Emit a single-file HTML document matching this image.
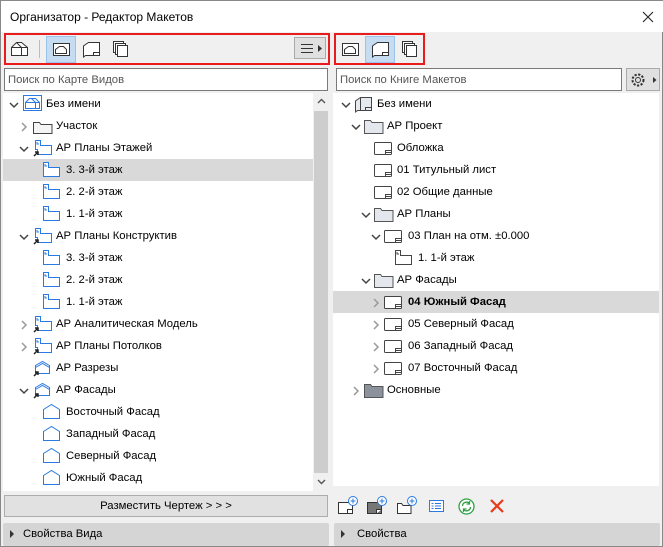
<!DOCTYPE html>
<html><head><meta charset="utf-8"><style>
*{margin:0;padding:0;box-sizing:border-box}
body{width:663px;height:547px;background:#f0f0f0;font-family:"Liberation Sans","Noto Sans CJK SC",sans-serif;font-size:11.3px;color:#000;position:relative;overflow:hidden;border:1px solid #888}
.a{position:absolute}
.t{position:absolute;white-space:nowrap;line-height:14px}
svg{position:absolute;overflow:visible}
</style></head><body>
<div class="a" style="left:0;top:0;width:663px;height:31px;background:#fff"></div>
<div class="t" style="left:9px;top:9px;font-size:12px">Организатор - Редактор Макетов</div>
<svg style="left:641px;top:10px" width="12" height="12"><path d="M1 1l10 10M11 1L1 11" stroke="#222" stroke-width="1.1"/></svg>

<div class="a" style="left:3px;top:32px;width:326px;height:32px;border:2px solid #e81c1c"></div>
<div class="a" style="left:333px;top:32px;width:91px;height:32px;border:2px solid #e81c1c"></div>
<svg style="left:9px;top:40px" width="20" height="16"><path d="M1.5 14.5v-8l5-5h5l6 5v8zM6.5 1.5l5 5v8M1.5 6.5h10l6 0" stroke="#333" fill="#fff"/></svg>
<div class="a" style="left:38px;top:39px;width:1px;height:18px;background:#bbb"></div>
<div class="a" style="left:45px;top:35px;width:30px;height:27px;background:#c5dcf2;border:1px solid #9cc3ea"></div>
<svg style="left:51px;top:41px" width="20" height="16"><rect x="1.5" y="1.5" width="16" height="12" fill="#fff" stroke="#333"/><path d="M3.5 11.5v-4l4-3h4l3 3v4z" fill="#fff" stroke="#333"/></svg>
<svg style="left:81px;top:40px" width="20" height="17"><path d="M3.5 3.5l3-2h11v13h-14l-2 1.5v-11z" fill="#fff" stroke="#333"/><path d="M11.5 14.5v-3h6" stroke="#333" fill="none"/></svg>
<svg style="left:111px;top:39px" width="18" height="18"><rect x="1.5" y="1.5" width="10" height="11" fill="#fff" stroke="#333"/><rect x="3.5" y="3.5" width="10" height="11" fill="#fff" stroke="#333"/><rect x="5.5" y="5.5" width="10" height="11" fill="#fff" stroke="#333"/></svg>
<div class="a" style="left:293px;top:36px;width:32px;height:22px;background:#e0e0e0;border:1px solid #aaa"></div>
<svg style="left:300px;top:42px" width="22" height="12"><path d="M0 1.5h12M0 5.5h12M0 9.5h12" stroke="#333"/><path d="M17 2l4 3.5-4 3.5z" fill="#333"/></svg>

<svg style="left:340px;top:41px" width="20" height="16"><rect x="1.5" y="1.5" width="16" height="12" fill="#fff" stroke="#333"/><path d="M3.5 11.5v-4l4-3h4l3 3v4z" fill="#fff" stroke="#333"/></svg>
<div class="a" style="left:364px;top:35px;width:30px;height:27px;background:#c5dcf2;border:1px solid #9cc3ea"></div>
<svg style="left:370px;top:40px" width="20" height="17"><path d="M3.5 3.5l3-2h11v13h-14l-2 1.5v-11z" fill="#fff" stroke="#333"/><path d="M11.5 14.5v-3h6" stroke="#333" fill="none"/></svg>
<svg style="left:400px;top:39px" width="18" height="18"><rect x="1.5" y="1.5" width="10" height="11" fill="#fff" stroke="#333"/><rect x="3.5" y="3.5" width="10" height="11" fill="#fff" stroke="#333"/><rect x="5.5" y="5.5" width="10" height="11" fill="#fff" stroke="#333"/></svg>

<div class="a" style="left:3px;top:67px;width:324px;height:23px;background:#fff;border:1px solid #7a7a7a"></div>
<div class="t" style="left:7px;top:72px;color:#555">Поиск по Карте Видов</div>
<div class="a" style="left:335px;top:67px;width:286px;height:23px;background:#fff;border:1px solid #7a7a7a"></div>
<div class="t" style="left:339px;top:72px;color:#555">Поиск по Книге Макетов</div>
<div class="a" style="left:625px;top:67px;width:34px;height:23px;background:#e0e0e0;border:1px solid #aaa"></div>
<svg style="left:629px;top:71px" width="30" height="16"><circle cx="8" cy="8" r="2.5" fill="none" stroke="#333"/><circle cx="8" cy="8" r="5.5" fill="none" stroke="#333" stroke-dasharray="2.2 1.5" stroke-width="2"/><path d="M23 5l3.5 3-3.5 3z" fill="#333"/></svg>

<div class="a" style="left:2px;top:92px;width:310px;height:398px;background:#fff"></div>
<div class="a" style="left:312px;top:92px;width:16px;height:398px;background:#f0f0f0"></div>
<div class="a" style="left:313px;top:110px;width:14px;height:362px;background:#cdcdcd"></div>
<svg style="left:316px;top:97px" width="9" height="6"><path d="M1 5l3.5-3.5L8 5" stroke="#555" fill="none" stroke-width="1.4"/></svg>
<svg style="left:316px;top:478px" width="9" height="6"><path d="M1 1l3.5 3.5L8 1" stroke="#555" fill="none" stroke-width="1.4"/></svg>
<div class="a" style="left:2px;top:158px;width:310px;height:22px;background:#d9d9d9"></div>

<svg style="left:8px;top:101px" width="10" height="6"><path d="M1 1l4 4 4-4" stroke="#444" fill="none" stroke-width="1.5"/></svg>
<svg style="left:20px;top:121px" width="6" height="10"><path d="M1 1l4 4-4 4" stroke="#999" fill="none" stroke-width="1.5"/></svg>
<svg style="left:18px;top:145px" width="10" height="6"><path d="M1 1l4 4 4-4" stroke="#444" fill="none" stroke-width="1.5"/></svg>
<svg style="left:18px;top:233px" width="10" height="6"><path d="M1 1l4 4 4-4" stroke="#444" fill="none" stroke-width="1.5"/></svg>
<svg style="left:20px;top:319px" width="6" height="10"><path d="M1 1l4 4-4 4" stroke="#999" fill="none" stroke-width="1.5"/></svg>
<svg style="left:20px;top:341px" width="6" height="10"><path d="M1 1l4 4-4 4" stroke="#999" fill="none" stroke-width="1.5"/></svg>
<svg style="left:18px;top:387px" width="10" height="6"><path d="M1 1l4 4 4-4" stroke="#444" fill="none" stroke-width="1.5"/></svg>

<svg style="left:22px;top:94px" width="20" height="17"><rect x="0.5" y="0.5" width="18" height="15" fill="#fff" stroke="#2a7ae2"/><path d="M2.5 13.5v-6l4-4h6l4 4v6zM2.5 7.5h14M8.5 3.5l4 4v6" fill="none" stroke="#2a7ae2"/></svg>
<svg style="left:32px;top:118px" width="20" height="15"><path d="M0.5 3.5h6l1.5 2h11v9h-18.5z" fill="#f4f4f4" stroke="#444"/></svg>
<svg style="left:32px;top:139px" width="20" height="17"><path d="M2.5 0.5h5v5h11v9h-14v-5h-2z" fill="#fff" stroke="#2a7ae2"/><path d="M4 2v2h2" stroke="#2a7ae2" fill="none"/><path d="M1 16l4-4M2 12h3v3" stroke="#222" stroke-width="1.5" fill="none"/></svg>
<svg style="left:32px;top:227px" width="20" height="17"><path d="M2.5 0.5h5v5h11v9h-14v-5h-2z" fill="#fff" stroke="#2a7ae2"/><path d="M4 2v2h2" stroke="#2a7ae2" fill="none"/><path d="M1 16l4-4M2 12h3v3" stroke="#222" stroke-width="1.5" fill="none"/></svg>
<svg style="left:32px;top:315px" width="20" height="17"><path d="M2.5 0.5h5v5h11v9h-14v-5h-2z" fill="#fff" stroke="#2a7ae2"/><path d="M4 2v2h2" stroke="#2a7ae2" fill="none"/><path d="M1 16l4-4M2 12h3v3" stroke="#222" stroke-width="1.5" fill="none"/></svg>
<svg style="left:32px;top:337px" width="20" height="17"><path d="M2.5 0.5h5v5h11v9h-14v-5h-2z" fill="#fff" stroke="#2a7ae2"/><path d="M4 2v2h2" stroke="#2a7ae2" fill="none"/><path d="M1 16l4-4M2 12h3v3" stroke="#222" stroke-width="1.5" fill="none"/></svg>
<svg style="left:32px;top:359px" width="20" height="17"><path d="M2.5 5.5l7-4 7 4v8h-14z M2.5 7.5l7-4 7 4" fill="#fff" stroke="#2a7ae2"/><path d="M1 16l4-4M2 12h3v3" stroke="#222" stroke-width="1.5" fill="none"/></svg>
<svg style="left:32px;top:381px" width="20" height="17"><path d="M2.5 5.5l7-4 7 4v8h-14z M2.5 7.5l7-4 7 4" fill="#fff" stroke="#2a7ae2"/><path d="M1 16l4-4M2 12h3v3" stroke="#222" stroke-width="1.5" fill="none"/></svg>
<svg style="left:42px;top:161px" width="18" height="16"><path d="M0.5 0.5h5v5h11v9h-16z" fill="#fff" stroke="#2a7ae2"/><path d="M2 2v2h2" stroke="#2a7ae2" fill="none"/></svg>
<svg style="left:42px;top:183px" width="18" height="16"><path d="M0.5 0.5h5v5h11v9h-16z" fill="#fff" stroke="#2a7ae2"/><path d="M2 2v2h2" stroke="#2a7ae2" fill="none"/></svg>
<svg style="left:42px;top:205px" width="18" height="16"><path d="M0.5 0.5h5v5h11v9h-16z" fill="#fff" stroke="#2a7ae2"/><path d="M2 2v2h2" stroke="#2a7ae2" fill="none"/></svg>
<svg style="left:42px;top:249px" width="18" height="16"><path d="M0.5 0.5h5v5h11v9h-16z" fill="#fff" stroke="#2a7ae2"/><path d="M2 2v2h2" stroke="#2a7ae2" fill="none"/></svg>
<svg style="left:42px;top:271px" width="18" height="16"><path d="M0.5 0.5h5v5h11v9h-16z" fill="#fff" stroke="#2a7ae2"/><path d="M2 2v2h2" stroke="#2a7ae2" fill="none"/></svg>
<svg style="left:42px;top:293px" width="18" height="16"><path d="M0.5 0.5h5v5h11v9h-16z" fill="#fff" stroke="#2a7ae2"/><path d="M2 2v2h2" stroke="#2a7ae2" fill="none"/></svg>
<svg style="left:42px;top:403px" width="18" height="16"><path d="M0.5 5.5l8-5 8 5v9h-16z" fill="#fff" stroke="#2a7ae2"/></svg>
<svg style="left:42px;top:425px" width="18" height="16"><path d="M0.5 5.5l8-5 8 5v9h-16z" fill="#fff" stroke="#2a7ae2"/></svg>
<svg style="left:42px;top:447px" width="18" height="16"><path d="M0.5 5.5l8-5 8 5v9h-16z" fill="#fff" stroke="#2a7ae2"/></svg>
<svg style="left:42px;top:469px" width="18" height="16"><path d="M0.5 5.5l8-5 8 5v9h-16z" fill="#fff" stroke="#2a7ae2"/></svg>

<div class="t" style="left:45px;top:96px">Без имени</div>
<div class="t" style="left:55px;top:118px">Участок</div>
<div class="t" style="left:55px;top:140px">АР Планы Этажей</div>
<div class="t" style="left:65px;top:162px">3. 3-й этаж</div>
<div class="t" style="left:65px;top:184px">2. 2-й этаж</div>
<div class="t" style="left:65px;top:206px">1. 1-й этаж</div>
<div class="t" style="left:55px;top:228px">АР Планы Конструктив</div>
<div class="t" style="left:65px;top:250px">3. 3-й этаж</div>
<div class="t" style="left:65px;top:272px">2. 2-й этаж</div>
<div class="t" style="left:65px;top:294px">1. 1-й этаж</div>
<div class="t" style="left:55px;top:316px">АР Аналитическая Модель</div>
<div class="t" style="left:55px;top:338px">АР Планы Потолков</div>
<div class="t" style="left:55px;top:360px">АР Разрезы</div>
<div class="t" style="left:55px;top:382px">АР Фасады</div>
<div class="t" style="left:65px;top:404px">Восточный Фасад</div>
<div class="t" style="left:65px;top:426px">Западный Фасад</div>
<div class="t" style="left:65px;top:448px">Северный Фасад</div>
<div class="t" style="left:65px;top:470px">Южный Фасад</div>

<div class="a" style="left:332px;top:92px;width:326px;height:393px;background:#fff"></div>
<div class="a" style="left:332px;top:290px;width:326px;height:22px;background:#d9d9d9"></div>
<svg style="left:340px;top:101px" width="10" height="6"><path d="M1 1l4 4 4-4" stroke="#444" fill="none" stroke-width="1.5"/></svg>
<svg style="left:350px;top:123px" width="10" height="6"><path d="M1 1l4 4 4-4" stroke="#444" fill="none" stroke-width="1.5"/></svg>
<svg style="left:360px;top:211px" width="10" height="6"><path d="M1 1l4 4 4-4" stroke="#444" fill="none" stroke-width="1.5"/></svg>
<svg style="left:370px;top:233px" width="10" height="6"><path d="M1 1l4 4 4-4" stroke="#444" fill="none" stroke-width="1.5"/></svg>
<svg style="left:360px;top:277px" width="10" height="6"><path d="M1 1l4 4 4-4" stroke="#444" fill="none" stroke-width="1.5"/></svg>
<svg style="left:372px;top:297px" width="6" height="10"><path d="M1 1l4 4-4 4" stroke="#999" fill="none" stroke-width="1.5"/></svg>
<svg style="left:372px;top:319px" width="6" height="10"><path d="M1 1l4 4-4 4" stroke="#999" fill="none" stroke-width="1.5"/></svg>
<svg style="left:372px;top:341px" width="6" height="10"><path d="M1 1l4 4-4 4" stroke="#999" fill="none" stroke-width="1.5"/></svg>
<svg style="left:372px;top:363px" width="6" height="10"><path d="M1 1l4 4-4 4" stroke="#999" fill="none" stroke-width="1.5"/></svg>
<svg style="left:352px;top:385px" width="6" height="10"><path d="M1 1l4 4-4 4" stroke="#999" fill="none" stroke-width="1.5"/></svg>

<svg style="left:353px;top:95px" width="20" height="17"><path d="M3.5 3.5l3-2h11v13h-14l-2 1.5v-11z" fill="#e6eaef" stroke="#444"/><path d="M6.5 1.5v13M11.5 14.5v-3h6" stroke="#444" fill="none"/></svg>
<svg style="left:363px;top:118px" width="20" height="15"><path d="M0.5 1.5h6l1.5 2h11v11h-18.5z" fill="#e4e8ee" stroke="#555"/></svg>
<svg style="left:373px;top:206px" width="20" height="15"><path d="M0.5 1.5h6l1.5 2h11v11h-18.5z" fill="#e4e8ee" stroke="#555"/></svg>
<svg style="left:373px;top:272px" width="20" height="15"><path d="M0.5 1.5h6l1.5 2h11v11h-18.5z" fill="#e4e8ee" stroke="#555"/></svg>
<svg style="left:363px;top:382px" width="20" height="15"><path d="M0.5 1.5h6l1.5 2h11v11h-18.5z" fill="#8b929b" stroke="#555"/></svg>
<svg style="left:373px;top:140px" width="19" height="15"><rect x="0.5" y="1.5" width="17" height="12" rx="1" fill="#fff" stroke="#444"/><path d="M11.5 13.5v-4h6M11.5 11.5h6" stroke="#444" fill="none"/></svg>
<svg style="left:373px;top:162px" width="19" height="15"><rect x="0.5" y="1.5" width="17" height="12" rx="1" fill="#fff" stroke="#444"/><path d="M11.5 13.5v-4h6M11.5 11.5h6" stroke="#444" fill="none"/></svg>
<svg style="left:373px;top:184px" width="19" height="15"><rect x="0.5" y="1.5" width="17" height="12" rx="1" fill="#fff" stroke="#444"/><path d="M11.5 13.5v-4h6M11.5 11.5h6" stroke="#444" fill="none"/></svg>
<svg style="left:383px;top:228px" width="19" height="15"><rect x="0.5" y="1.5" width="17" height="12" rx="1" fill="#fff" stroke="#444"/><path d="M11.5 13.5v-4h6M11.5 11.5h6" stroke="#444" fill="none"/></svg>
<svg style="left:383px;top:294px" width="19" height="15"><rect x="0.5" y="1.5" width="17" height="12" rx="1" fill="#fff" stroke="#444"/><path d="M11.5 13.5v-4h6M11.5 11.5h6" stroke="#444" fill="none"/></svg>
<svg style="left:383px;top:316px" width="19" height="15"><rect x="0.5" y="1.5" width="17" height="12" rx="1" fill="#fff" stroke="#444"/><path d="M11.5 13.5v-4h6M11.5 11.5h6" stroke="#444" fill="none"/></svg>
<svg style="left:383px;top:338px" width="19" height="15"><rect x="0.5" y="1.5" width="17" height="12" rx="1" fill="#fff" stroke="#444"/><path d="M11.5 13.5v-4h6M11.5 11.5h6" stroke="#444" fill="none"/></svg>
<svg style="left:383px;top:360px" width="19" height="15"><rect x="0.5" y="1.5" width="17" height="12" rx="1" fill="#fff" stroke="#444"/><path d="M11.5 13.5v-4h6M11.5 11.5h6" stroke="#444" fill="none"/></svg>
<svg style="left:394px;top:249px" width="18" height="16"><path d="M0.5 0.5h5v5h11v9h-16z" fill="#fff" stroke="#444"/><path d="M2 2v2h2" stroke="#444" fill="none"/></svg>

<div class="t" style="left:376px;top:96px">Без имени</div>
<div class="t" style="left:386px;top:118px">АР Проект</div>
<div class="t" style="left:396px;top:140px">Обложка</div>
<div class="t" style="left:396px;top:162px">01 Титульный лист</div>
<div class="t" style="left:396px;top:184px">02 Общие данные</div>
<div class="t" style="left:396px;top:206px">АР Планы</div>
<div class="t" style="left:407px;top:228px">03 План на отм. ±0.000</div>
<div class="t" style="left:417px;top:250px">1. 1-й этаж</div>
<div class="t" style="left:396px;top:272px">АР Фасады</div>
<div class="t" style="left:407px;top:294px;font-weight:bold">04 Южный Фасад</div>
<div class="t" style="left:407px;top:316px">05 Северный Фасад</div>
<div class="t" style="left:407px;top:338px">06 Западный Фасад</div>
<div class="t" style="left:407px;top:360px">07 Восточный Фасад</div>
<div class="t" style="left:386px;top:382px">Основные</div>

<div class="a" style="left:3px;top:494px;width:324px;height:22px;background:#e1e1e1;border:1px solid #adadad"></div>
<div class="t" style="left:3px;top:498px;width:324px;text-align:center">Разместить Чертеж &gt; &gt; &gt;</div>
<div class="a" style="left:2px;top:522px;width:326px;height:23px;background:#d5d5d5;border-radius:2px"></div>
<svg style="left:9px;top:529px" width="5" height="8"><path d="M0 0l4 4-4 4z" fill="#333"/></svg>
<div class="t" style="left:22px;top:526px">Свойства Вида</div>
<div class="a" style="left:333px;top:522px;width:326px;height:23px;background:#d5d5d5;border-radius:2px"></div>
<svg style="left:340px;top:529px" width="5" height="8"><path d="M0 0l4 4-4 4z" fill="#333"/></svg>
<div class="t" style="left:356px;top:526px">Свойства</div>

<svg style="left:337px;top:495px" width="22" height="20"><rect x="0.5" y="6.5" width="14" height="11" fill="#fff" stroke="#333"/><path d="M9.5 17.5v-4h5" stroke="#333" fill="none"/><circle cx="15" cy="5" r="4.5" fill="#fff" stroke="#2a7ae2"/><path d="M15 2.5v5M12.5 5h5" stroke="#2a7ae2"/></svg>
<svg style="left:366px;top:495px" width="22" height="20"><rect x="0.5" y="6.5" width="14" height="11" fill="#777" stroke="#333"/><path d="M9.5 17.5v-4h5" stroke="#333" fill="#fff"/><circle cx="15" cy="5" r="4.5" fill="#fff" stroke="#2a7ae2"/><path d="M15 2.5v5M12.5 5h5" stroke="#2a7ae2"/></svg>
<svg style="left:396px;top:495px" width="22" height="20"><path d="M0.5 7.5h4l1.5 2h8v8h-13.5z" fill="#fff" stroke="#333"/><circle cx="15" cy="5" r="4.5" fill="#fff" stroke="#2a7ae2"/><path d="M15 2.5v5M12.5 5h5" stroke="#2a7ae2"/></svg>
<svg style="left:428px;top:499px" width="16" height="13"><rect x="0.5" y="0.5" width="14" height="11" fill="#fff" stroke="#2a7ae2"/><path d="M2.5 3.5h2M6 3.5h6M2.5 6h2M6 6h6M2.5 8.5h2M6 8.5h6" stroke="#2a7ae2"/></svg>
<svg style="left:457px;top:497px" width="18" height="18"><circle cx="8.5" cy="8.5" r="7.5" fill="#fff" stroke="#2ea043" stroke-width="1.3"/><path d="M4.5 8a4 4 0 0 1 7-2.5M12.5 9a4 4 0 0 1-7 2.5M11.5 3v3h-3M5.5 14v-3h3" stroke="#2ea043" fill="none" stroke-width="1.3"/></svg>
<svg style="left:488px;top:497px" width="16" height="16"><path d="M2 2l12 12M14 2L2 14" stroke="#e8391f" stroke-width="2.2"/></svg>
</body></html>
